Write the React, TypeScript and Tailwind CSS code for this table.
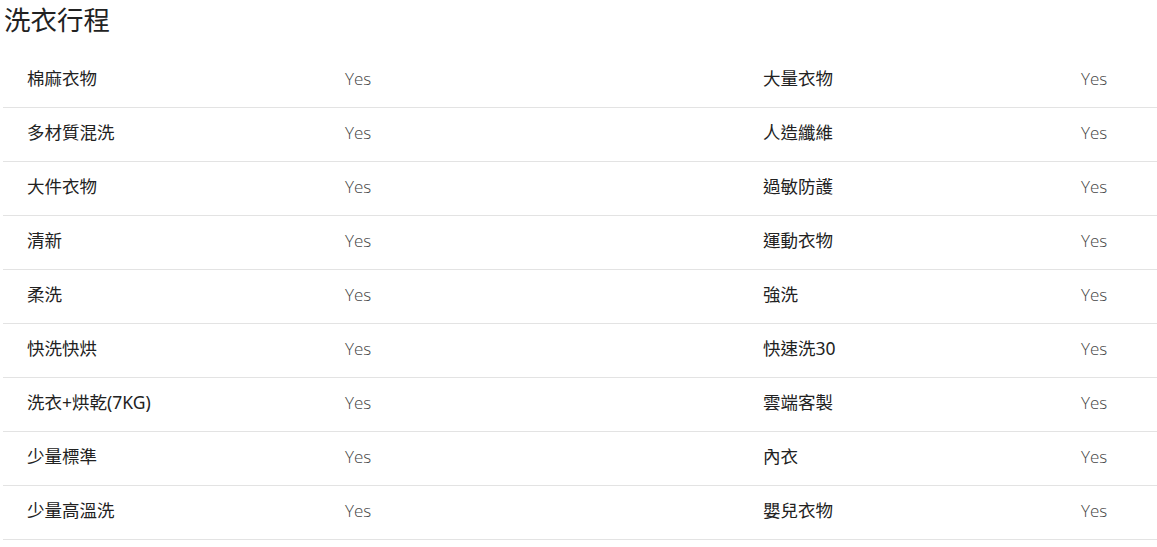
const rows: [string, string][] = [
  ['棉麻衣物', '大量衣物'],
  ['多材質混洗', '人造纖維'],
  ['大件衣物', '過敏防護'],
  ['清新', '運動衣物'],
  ['柔洗', '強洗'],
  ['快洗快烘', '快速洗30'],
  ['洗衣+烘乾(7KG)', '雲端客製'],
  ['少量標準', '內衣'],
  ['少量高溫洗', '嬰兒衣物'],
]

function Cell({ label }: { label: string }) {
  return (
    <div className="flex h-[54px] items-center border-b border-[#e3e3e3] pb-[4px]">
      <div className="w-[342px] pl-6 text-[17.5px] text-[#222]">{label}</div>
      <div className="text-[17px] font-light text-[#444] [font-family:'Open_Sans',sans-serif]">Yes</div>
    </div>
  )
}

export default function App() {
  return (
    <div className="h-[547px] w-[1157px] overflow-hidden bg-white [font-family:'Noto_Sans','Noto_Sans_CJK_TC',sans-serif]">
      <h2 className="flex h-[54px] items-start pl-1 pt-[1px] text-[26.5px] font-normal text-[#222]">洗衣行程</h2>
      <div className="ml-[3px] grid grid-cols-[736px_736px]">
        {rows.map(([a, b]) => (
          <div key={a} className="contents">
            <Cell label={a} />
            <Cell label={b} />
          </div>
        ))}
      </div>
    </div>
  )
}
